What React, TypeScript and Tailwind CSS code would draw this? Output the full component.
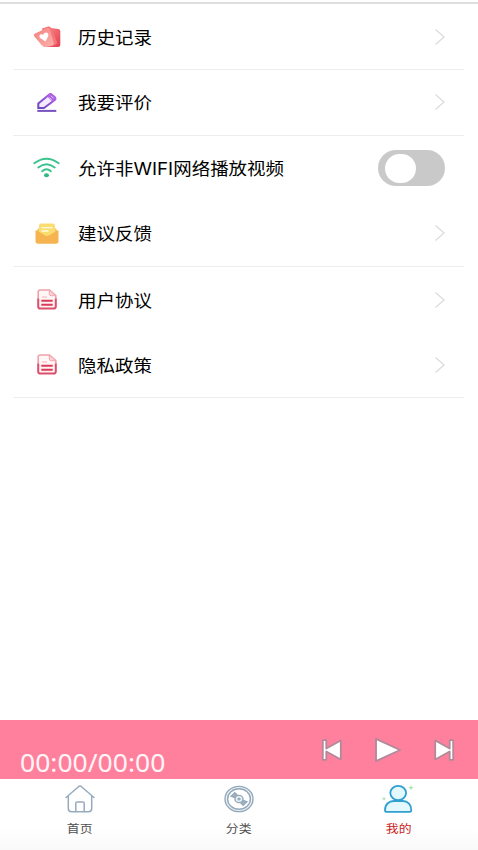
import type { ReactNode } from 'react';

const HistoryIcon = () => (
  <svg width="28" height="24" viewBox="0 0 28 24">
    <defs>
      <linearGradient id="card" x1="0" y1="0" x2="1" y2="1">
        <stop offset="0" stopColor="#f98f8f" />
        <stop offset="1" stopColor="#e43f50" />
      </linearGradient>
      <linearGradient id="front" x1="0" y1="0" x2="1" y2="1">
        <stop offset="0" stopColor="#f4807f" />
        <stop offset="1" stopColor="#fbb2ac" />
      </linearGradient>
    </defs>
    <path d="M10 3.5 15 1.5Q17 1 18 3L25.5 4Q27.3 4.3 27.3 6V20Q27.3 22 25 22H11Z" fill="url(#card)" />
    <path d="M9 3.5 15.5 1.8Q17 1.5 18 3L24 17Q24.4 19 22 20L12 22Z" fill="#f7777b" />
    <path d="M2 8.5 14 3Q15.8 2.3 16.5 4L20.8 18Q21 20 19 20.8L13 22Q10.5 22.3 8.5 20L1 11Q0 9.5 2 8.5Z" fill="url(#front)" />
    <path d="M12.5 16.5 7.5 13.3C5 11 7.2 7.7 10.3 9.8C11.3 6.2 16.5 7 15.2 11.3Z" fill="white" />
  </svg>
);

const PenIcon = () => (
  <svg width="20" height="21" viewBox="0 0 20 21" fill="none">
    <defs>
      <linearGradient id="pen" x1="1" y1="0" x2="0" y2="1">
        <stop offset="0" stopColor="#b45bea" />
        <stop offset="1" stopColor="#684aba" />
      </linearGradient>
    </defs>
    <path d="M1.3 16V11.5L12 2.8Q13.3 1.4 14.8 2.8L18 5.5Q19 6.8 17.7 8L7 16Z" fill="#f3eaff" stroke="url(#pen)" strokeWidth="2" />
    <path d="M10 4.2 12.5 1.8Q13.8.8 15.2 1.9L18.6 5Q19.9 6.4 18.4 7.8L15.8 10Z" fill="#ad62e6" />
    <path d="m14 3.8 2.5 2.5m-4.3-.9 2.4 2.5" stroke="#eadbff" strokeWidth=".9" />
    <path d="M.3 18.9h19" stroke="#7852bd" strokeWidth="2" />
  </svg>
);

const WifiIcon = () => (
  <svg width="27" height="22" viewBox="0 0 27 22" fill="none" stroke="#3bc38d" strokeWidth="1.9" strokeLinecap="round">
    <path d="M1.3 6.3Q13.5-2.8 25.7 6.3M5.3 10.5Q13.5 3.8 21.7 10.5M9.2 14.2Q13.5 10.2 17.8 14.2" />
    <ellipse cx="13.5" cy="18.3" rx="2.5" ry="2" fill="#30b77f" stroke="none" />
  </svg>
);

const MailIcon = () => (
  <svg width="24" height="23" viewBox="0 0 24 23">
    <path d="M2 8 5 5H19L22 8V15H2Z" fill="#f5c565" />
    <rect x="4" y="1.5" width="16" height="15" rx="2" fill="#fbdc70" />
    <path d="M6.5 5.7h11M6.5 9h7" stroke="#fffbe0" strokeWidth="1.3" />
    <path d="M.5 9Q.5 7.8 2 8.8L9.7 13.3Q12 14.6 14.3 13.3L22 8.8Q23.5 7.8 23.5 9V19Q23.5 21.8 21 21.8H3Q.5 21.8.5 19Z" fill="#f5b450" />
  </svg>
);

const DocIcon = () => (
  <svg width="20" height="21" viewBox="0 0 20 21" fill="none">
    <path d="M1.2 10V3Q1.2 1 3.2 1H12.5L18.8 6.5V10" fill="#fff6f6" stroke="#f0a0a9" strokeWidth="1.6" />
    <path d="M12.3 1V5Q12.3 6.7 14.3 6.7H18.8Z" fill="#fbd4d7" stroke="#f3a6ae" />
    <path d="M5 8h5" stroke="#f6bcc2" strokeWidth="1.2" />
    <path d="M1.2 9.5V17.5Q1.2 19.6 3.4 19.6H16.6Q18.8 19.6 18.8 17.5V9.5" fill="#fff3f4" stroke="#dc506c" strokeWidth="2" />
    <path d="M4.3 11.8H15.7M4.3 15.7H15.7" stroke="#d93c59" strokeWidth="2" />
  </svg>
);

const Chevron = () => (
  <svg width="12" height="18" viewBox="0 0 12 18" fill="none" stroke="#dcdcdc" strokeWidth="1.3">
    <path d="m1.5 1.5 8.5 7.5-8.5 7.5" />
  </svg>
);

const Toggle = () => (
  <span className="flex h-9 w-[67px] items-center rounded-full bg-[#c9c9c9] pl-[7px]">
    <span className="h-[29px] w-[31px] rounded-full bg-white" />
  </span>
);

const Row = ({ icon, label, line, control }: { icon: ReactNode; label: ReactNode; line?: boolean; control?: ReactNode }) => (
  <li className={`mr-[14px] ml-[13px] flex h-[65.6px] items-center ${control ? 'pr-[19px]' : 'pr-[18px]'} ${line ? 'border-b border-[#ededed]' : ''}`}>
    <span className="ml-[19.5px] flex w-7 shrink-0 justify-center">{icon}</span>
    <span className="ml-[17.5px] flex-1 whitespace-nowrap">
      <span className="inline-block origin-left scale-x-[1.12] text-[16.5px] leading-6 text-black">{label}</span>
    </span>
    {control ?? <Chevron />}
  </li>
);

const HomeIcon = () => (
  <svg width="30" height="28" viewBox="0 0 30 28" fill="none" stroke="#98abbc" strokeWidth="1.5" strokeLinecap="round" strokeLinejoin="round">
    <path d="M1 12.5 13.5 1.7Q15 .5 16.5 1.7L29 12.5M3.3 11V23.5Q3.3 26.7 6.5 26.7H23.5Q26.7 26.7 26.7 23.5V11" />
    <path d="M10.8 26.5V18.3Q10.8 17 12.1 17H17.9Q19.2 17 19.2 18.3V26.5" />
  </svg>
);

const DiscIcon = () => (
  <svg width="30" height="28" viewBox="0 0 30 28" fill="none" stroke="#93a8b9" strokeWidth="1.4">
    <ellipse cx="15" cy="14" rx="14" ry="12.6" fill="#edf3f7" />
    <ellipse cx="15" cy="14" rx="11.4" ry="10.2" fill="white" />
    <path d="M7.2 11.2 10.8 7.8 13.5 10.5 11.2 12.6ZM22.8 16.8 19.2 20.2 16.5 17.5 18.8 15.4Z" fill="#a2b1bf" />
    <ellipse cx="15" cy="14" rx="4" ry="3.6" fill="#edf3f7" />
    <ellipse cx="15" cy="14" rx="1" ry=".9" />
  </svg>
);

const UserIcon = () => (
  <svg width="34" height="30" viewBox="0 0 34 30" fill="none">
    <g fill="#e3f8ff" stroke="#31a0d1" strokeWidth="1.8">
      <ellipse cx="17.2" cy="9" rx="7.9" ry="7.1" />
      <path d="M4 26.5C3.8 20.5 8 17 12.7 17H21.8C26.8 17 30.6 21 30.3 26.5Q30.3 27.8 28.6 27.8H5.7Q4 27.8 4 26.5Z" />
    </g>
    <path d="m30 1 .7 2 2 .7-2 .7-.7 2-.7-2-2-.7 2-.7ZM3 12.5l.6 1.7 1.7.6-1.7.6-.6 1.7-.6-1.7-1.7-.6 1.7-.6Z" fill="#a4dfae" />
  </svg>
);

const Tab = ({ icon, label, active }: { icon: ReactNode; label: string; active?: boolean }) => (
  <div className="flex flex-1 flex-col items-center pt-[5px]">
    <span className="flex h-[30px] items-center">{icon}</span>
    <span className={`mt-1 inline-block scale-x-[1.1] text-[11.7px] leading-5 ${active ? 'text-[#c91d24]' : 'text-[#505050]'}`}>{label}</span>
  </div>
);

export default function App() {
  return (
    <main className="flex h-[850px] w-[478px] flex-col overflow-hidden bg-white font-['Noto_Sans_CJK_SC',sans-serif]">
      <div className="mt-0.5 h-0.5 shrink-0 bg-[#dedede]" />
      <ul className="flex-1 pt-[0.4px]">
        <Row icon={<HistoryIcon />} label="历史记录" line />
        <Row icon={<PenIcon />} label="我要评价" line />
        <Row
          icon={<WifiIcon />}
          label={<>允许非<span className="font-[Inter,sans-serif] text-[16.8px]">WIFI</span>网络播放视频</>}
          control={<Toggle />}
        />
        <Row icon={<MailIcon />} label="建议反馈" line />
        <Row icon={<DocIcon />} label="用户协议" />
        <Row icon={<DocIcon />} label="隐私政策" line />
      </ul>
      <section className="flex h-[59px] shrink-0 justify-between bg-[#ff809d] pr-[22.5px] pl-5">
        <span className="mt-[26px] h-8 origin-left scale-x-[1.06] font-['Noto_Sans',sans-serif] text-[25px] leading-8 text-[#fff5f7]">00:00/00:00</span>
        <div className="flex h-[59px] items-center gap-[30px]">
          <svg width="24" height="26" viewBox="0 0 24 26" fill="white" stroke="#b3899a" strokeWidth="1.8" strokeLinejoin="round">
            <path d="M2.8 3.2H6.3V11.5L20.8 3.5V22.5L6.3 14.5V22.8H2.8Z" />
          </svg>
          <svg width="28" height="28" viewBox="0 0 28 28" fill="white" stroke="#b3899a" strokeWidth="1.9" strokeLinejoin="round">
            <path d="M2 2.8 26 14 2 25.2Z" />
          </svg>
          <svg width="24" height="26" viewBox="0 0 24 26" fill="white" stroke="#b3899a" strokeWidth="1.8" strokeLinejoin="round">
            <path d="M21.2 3.2H17.7V11.5L3.2 3.5V22.5L17.7 14.5V22.8H21.2Z" />
          </svg>
        </div>
      </section>
      <nav className="flex h-[71px] shrink-0 bg-linear-to-b from-white from-70% to-[#f9f9f9]">
        <Tab icon={<HomeIcon />} label="首页" />
        <Tab icon={<DiscIcon />} label="分类" />
        <Tab icon={<UserIcon />} label="我的" active />
      </nav>
    </main>
  );
}
